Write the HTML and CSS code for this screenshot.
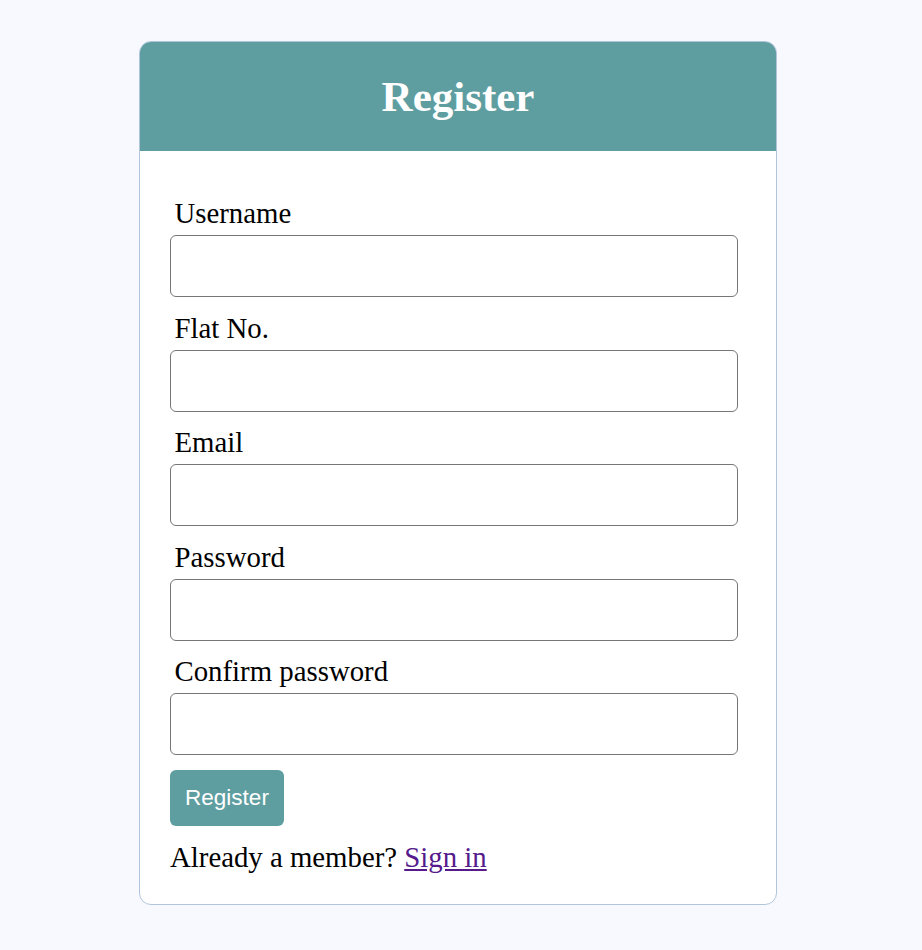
FILE: index.html
```
<!DOCTYPE html>
<html>
<head>
<meta charset="utf-8">
<link rel="stylesheet" href="styles.css">
</head>
<body>
<div class="card">
  <div class="card-header"><h1 class="title">Register</h1></div>
  <form class="form">
    <div class="field">
      <label class="label">Username</label>
      <input class="input" type="text">
    </div>
    <div class="field">
      <label class="label">Flat No.</label>
      <input class="input" type="text">
    </div>
    <div class="field">
      <label class="label">Email</label>
      <input class="input" type="email">
    </div>
    <div class="field">
      <label class="label">Password</label>
      <input class="input" type="password">
    </div>
    <div class="field">
      <label class="label">Confirm password</label>
      <input class="input" type="password">
    </div>
    <div class="actions">
      <button class="btn" type="button">Register</button>
    </div>
    <p class="signin">Already a member? <a class="link" href="#">Sign in</a></p>
  </form>
</div>
</body>
</html>
```
FILE: styles.css
```
html, body { margin: 0; padding: 0; }
body {
  background: #f8f8ff;
  font-family: "Liberation Serif", "Times New Roman", serif;
  min-height: 950px;
}
.card {
  width: 636px;
  margin: 41px 0 0 139px;
  background: #fff;
  border: 1px solid #b0c4de;
  border-radius: 12px;
  overflow: hidden;
}
.card-header {
  background: #5f9ea0;
  height: 109px;
  display: flex;
  align-items: center;
  justify-content: center;
}
.title {
  margin: 0;
  color: #fff;
  font-size: 43px;
  font-weight: bold;
  line-height: 1;
}
.form {
  padding: 46px 37px 30px 30px;
  display: flex;
  flex-direction: column;
}
.field {
  display: flex;
  flex-direction: column;
  margin-bottom: 14.5px;
}
.label {
  font-size: 28.8px;
  line-height: 33px;
  padding-left: 4.5px;
  margin-bottom: 5px;
  color: #000;
}
.input {
  box-sizing: border-box;
  height: 62px;
  width: 568px;
  border: 1px solid #767676;
  border-radius: 6px;
  margin: 0;
  background: #fff;
}
.actions { margin-top: 0; }
.btn {
  background: #5f9ea0;
  color: #fff;
  border: none;
  border-radius: 6px;
  width: 114px;
  height: 56px;
  font-family: "Liberation Sans", Arial, sans-serif;
  font-size: 22.5px;
  padding: 0;
}
.signin {
  margin: 15px 0 0 0;
  font-size: 28.8px;
  line-height: 33px;
}
.link { color: #551a8b; }
```
